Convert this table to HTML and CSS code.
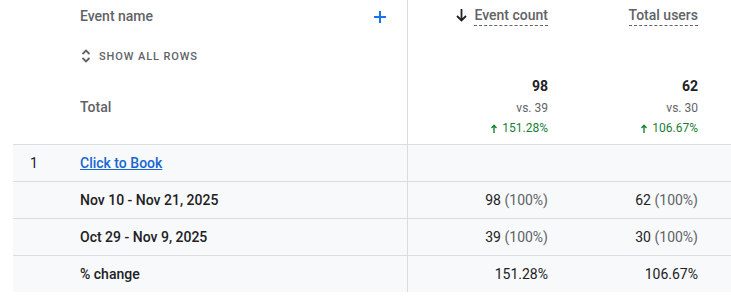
FILE: index.html
```html
<!DOCTYPE html>
<html>
<head>
<meta charset="utf-8">
<link rel="stylesheet" href="styles.css">
</head>
<body>
<div class="table">
  <div class="head dim-head">
    <div class="dim-top">
      <span class="head-label">Event name</span>
      <svg class="plus" width="12" height="12" viewBox="0 0 12 12"><path d="M6 0v12M0 6h12" stroke="#1a73e8" stroke-width="2"/></svg>
    </div>
    <div class="show-all">
      <svg width="10" height="14" viewBox="0 0 10 14"><path d="M1.5 5 5 1.5 8.5 5M1.5 9 5 12.5 8.5 9" fill="none" stroke="#5f6368" stroke-width="1.8"/></svg>
      <span>SHOW ALL ROWS</span>
    </div>
    <div class="total-label">Total</div>
  </div>
  <div class="head metric-head">
    <div class="metric-title">
      <svg width="11" height="13" viewBox="0 0 11 13"><path d="M5.5 0v11.5M1 7l4.5 4.5L10 7" fill="none" stroke="#202124" stroke-width="1.8"/></svg>
      <span class="dashed">Event count</span>
    </div>
    <div class="totals">
      <div class="big">98</div>
      <div class="vs">vs. 39</div>
      <div class="up"><svg width="6" height="9" viewBox="0 0 6 9"><path d="M3 9V1.5M.5 4 3 1.3 5.5 4" fill="none" stroke="#188038" stroke-width="1.4"/></svg>151.28%</div>
    </div>
  </div>
  <div class="head metric-head">
    <div class="metric-title">
      <span class="dashed">Total users</span>
    </div>
    <div class="totals">
      <div class="big">62</div>
      <div class="vs">vs. 30</div>
      <div class="up"><svg width="6" height="9" viewBox="0 0 6 9"><path d="M3 9V1.5M.5 4 3 1.3 5.5 4" fill="none" stroke="#188038" stroke-width="1.4"/></svg>106.67%</div>
    </div>
  </div>
  <div class="head filler"></div>

  <div class="cell dim"><span class="rank">1</span><a class="link" href="#">Click to Book</a></div>
  <div class="cell num"></div>
  <div class="cell num"></div>
  <div class="cell filler-row"></div>

  <div class="cell dim"><span class="rank"></span><span class="strong">Nov 10 - Nov 21, 2025</span></div>
  <div class="cell num">98&nbsp;<span class="pct">(100%)</span></div>
  <div class="cell num">62&nbsp;<span class="pct">(100%)</span></div>
  <div class="cell filler-row"></div>

  <div class="cell dim"><span class="rank"></span><span class="strong">Oct 29 - Nov 9, 2025</span></div>
  <div class="cell num">39&nbsp;<span class="pct">(100%)</span></div>
  <div class="cell num">30&nbsp;<span class="pct">(100%)</span></div>
  <div class="cell filler-row"></div>

  <div class="cell dim last"><span class="rank"></span><span class="strong">% change</span></div>
  <div class="cell num last">151.28%</div>
  <div class="cell num last">106.67%</div>
  <div class="cell filler-row last"></div>
</div>
</body>
</html>
```
FILE: styles.css
```css
html, body {
  margin: 0;
  padding: 0;
  background: #fff;
}
body {
  font-family: Roboto, "Liberation Sans", Arial, sans-serif;
  color: #202124;
  overflow: hidden;
}
.table {
  margin-left: 13px;
  width: 718px;
  display: grid;
  grid-template-columns: 395px 150px 150px 23px;
}
.head {
  height: 144px;
  border-bottom: 1px solid #dadce0;
  box-sizing: content-box;
}
.dim-head {
  border-right: 1px solid #dadce0;
  box-sizing: border-box;
  height: 145px;
  padding-left: 67px;
  padding-right: 21px;
  display: flex;
  flex-direction: column;
}
.dim-top {
  display: flex;
  justify-content: space-between;
  align-items: center;
  height: 32px;
}
.head-label {
  font-size: 14px;
  font-weight: 500;
  color: #5f6368;
}
.plus {
  margin-top: 2px;
}
.show-all {
  display: flex;
  align-items: center;
  gap: 8px;
  margin-top: 16px;
  height: 16px;
  padding-left: 1px;
}
.show-all span {
  font-size: 11px;
  font-weight: 500;
  letter-spacing: 0.9px;
  color: #5f6368;
}
.total-label {
  margin-top: 35px;
  font-size: 14px;
  font-weight: 500;
  color: #5f6368;
}
.metric-head {
  padding-right: 10px;
  display: flex;
  flex-direction: column;
  align-items: flex-end;
}
.metric-title {
  display: flex;
  align-items: center;
  gap: 7px;
  height: 30px;
  margin-top: 1px;
}
.metric-title svg {
  margin-top: -1px;
}
.dashed {
  font-size: 14px;
  font-weight: 500;
  color: #5f6368;
  border-bottom: 1px dashed #5f6368;
  line-height: 16px;
  padding-bottom: 2px;
  margin-top: 0;
}
.totals {
  margin-top: 47px;
  display: flex;
  flex-direction: column;
  align-items: flex-end;
}
.big {
  font-size: 14px;
  font-weight: 700;
  color: #202124;
  line-height: 16px;
}
.vs {
  font-size: 12px;
  color: #5f6368;
  line-height: 14px;
  margin-top: 7px;
}
.up {
  font-size: 12px;
  color: #188038;
  line-height: 14px;
  margin-top: 6px;
  display: flex;
  align-items: center;
  gap: 5px;
}
.filler {
  height: 144px;
}
.cell {
  background: #f8f9fa;
  height: 35px;
  border-bottom: 1px solid #dadce0;
  display: flex;
  align-items: center;
  font-size: 14px;
  padding-bottom: 1px;
  box-sizing: content-box;
}
.cell.last {
  border-bottom: none;
}
.dim {
  border-right: 1px solid #dadce0;
}
.rank {
  width: 67px;
  padding-left: 17px;
  box-sizing: border-box;
  color: #202124;
}
.link {
  color: #1967d2;
  text-decoration: underline;
  font-weight: 500;
}
.strong {
  font-weight: 500;
  color: #202124;
}
.num {
  justify-content: flex-end;
  padding-right: 10px;
  color: #202124;
}
.pct {
  color: #5f6368;
}
```
